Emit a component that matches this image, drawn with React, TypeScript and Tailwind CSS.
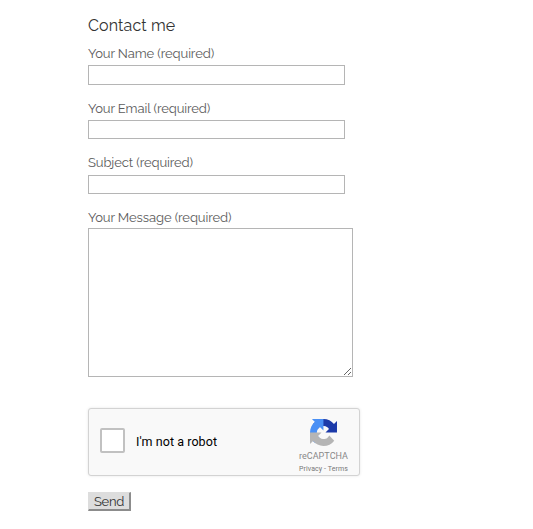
import React from 'react';

interface FieldProps {
  label: string;
  name: string;
  type?: string;
  className: string;
  inputClassName: string;
}

function Field({ label, name, type = 'text', className, inputClassName }: FieldProps) {
  return (
    <div className={className}>
      <label htmlFor={name} className="block h-5 w-fit whitespace-nowrap text-[13px] leading-[22px] tracking-[-0.09px] text-[#5c5c5c]">
        {label}
      </label>
      <input
        id={name}
        name={name}
        type={type}
        className={`block w-[257px] border border-[#b5b5b5] bg-white px-1 text-[13px] outline-none ${inputClassName}`}
      />
    </div>
  );
}

function RecaptchaLogo() {
  return (
    <svg viewBox="0 0 64 64" className="h-[27px] w-[27px]" aria-hidden="true">
      <path
        fill="#1c3aa9"
        d="M64 31.955l-.033-1.37V4.687l-7.16 7.16C50.948 4.674 42.033.093 32.05.093c-10.4 0-19.622 4.96-25.458 12.64l11.736 11.86a15.55 15.55 0 0 1 4.754-5.334c2.05-1.6 4.952-2.906 8.968-2.906.485 0 .86.057 1.135.163 4.976.393 9.288 3.14 11.828 7.124l-8.307 8.307L64 31.953"
      />
      <path
        fill="#4a90f5"
        d="M31.862.094l-1.37.033H4.594l7.16 7.16C4.58 13.147 0 22.06 0 32.046c0 10.4 4.96 19.622 12.64 25.458L24.5 45.768a15.55 15.55 0 0 1-5.334-4.754c-1.6-2.05-2.906-4.952-2.906-8.968 0-.485.057-.86.163-1.135.393-4.976 3.14-9.288 7.124-11.828l8.307 8.307L31.86.095"
      />
      <path
        fill="#b5b5b5"
        d="M.001 32.045l.033 1.37v25.898l7.16-7.16c5.86 7.173 14.774 11.754 24.76 11.754 10.4 0 19.622-4.96 25.458-12.64l-11.736-11.86a15.55 15.55 0 0 1-4.754 5.334c-2.05 1.6-4.952 2.906-8.968 2.906-.485 0-.86-.057-1.135-.163-4.976-.393-9.288-3.14-11.828-7.124l8.307-8.307c-10.522.04-22.4.066-27.295-.005"
      />
    </svg>
  );
}

function Recaptcha() {
  return (
    <div className="mt-[31px] flex h-[68px] w-[272px] rounded-[3px] border border-[#d3d3d3] bg-[#f9f9f9] font-['Roboto',sans-serif] shadow-[0_0_3px_rgba(0,0,0,0.1)]">
      <label className="mt-[19px] flex h-[25px] items-center pl-[11px]">
        <span className="block h-[25px] w-[25px] rounded-[2px] border-2 border-[#c1c1c1] bg-white" />
        <span className="ml-[11px] w-[90px] whitespace-nowrap pt-[3px] text-[12.5px] tracking-[0.06px] text-black">I'm not a robot</span>
      </label>
      <div className="mr-2.5 ml-auto flex w-[51px] flex-col items-center pt-[9.5px]">
        <RecaptchaLogo />
        <div className="mt-[4px] text-[9px] leading-3 tracking-[0.05px] text-[#888]">reCAPTCHA</div>
        <div className="mt-[2px] whitespace-nowrap text-[7px] leading-[10px] tracking-[0.1px] text-[#777]">
          <span>Privacy</span> - <span>Terms</span>
        </div>
      </div>
    </div>
  );
}

export default function App() {
  return (
    <main className="h-[529px] w-[533px] overflow-hidden bg-white pl-[88px] font-['Raleway','Lato',sans-serif]">
      <form className="pt-[14px]" onSubmit={(e) => e.preventDefault()}>
        <h3 className="h-[22px] w-fit text-base leading-6 tracking-[0.12px] text-[#333]">Contact me</h3>

        <Field label="Your Name (required)" name="your-name" className="mt-[7px]" inputClassName="mt-[2px] h-5" />
        <Field label="Your Email (required)" name="your-email" type="email" className="mt-[13px]" inputClassName="mt-[2px] h-[19px]" />
        <Field label="Subject (required)" name="your-subject" className="mt-[13px]" inputClassName="mt-[3px] h-[19px]" />

        <div className="mt-[13px]">
          <label htmlFor="your-message" className="block h-5 w-fit text-[13px] leading-[22px] tracking-[-0.09px] text-[#5c5c5c]">
            Your Message (required)
          </label>
          <textarea
            id="your-message"
            name="your-message"
            className="mt-px block h-[149px] w-[265px] resize border border-[#b5b5b5] bg-white p-1 text-[13px] outline-none"
          />
        </div>

        <Recaptcha />

        <button
          type="submit"
          className="mt-4 block h-[19px] w-[43px] border-t border-r-2 border-b-2 border-l border-t-[#ddd] border-r-[#8c8c8c] border-b-[#8c8c8c] border-l-[#ddd] bg-[#ddd] pt-px text-[13px] leading-4 tracking-[-0.3px] text-[#333]"
        >
          Send
        </button>
      </form>
    </main>
  );
}
